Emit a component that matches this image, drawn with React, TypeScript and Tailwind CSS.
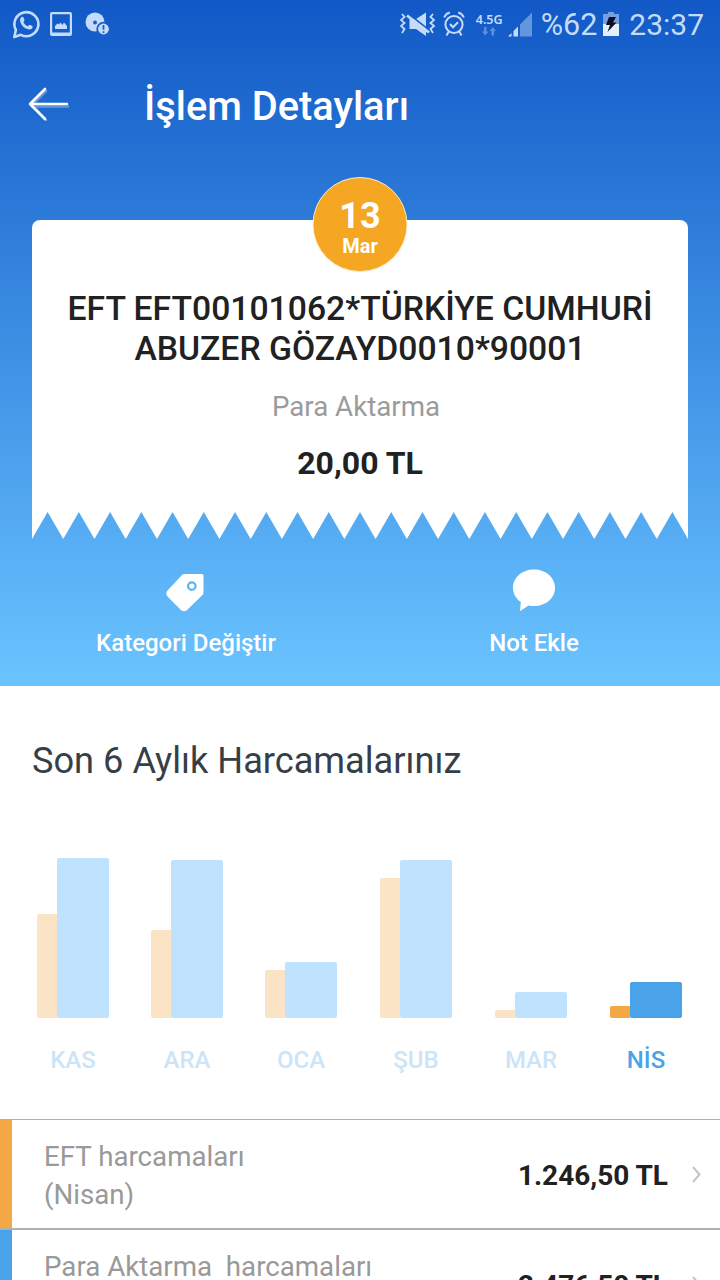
import clsx from 'clsx';

const months = [
  { label: 'KAS', income: 104, expense: 160 },
  { label: 'ARA', income: 88, expense: 158 },
  { label: 'OCA', income: 48, expense: 56 },
  { label: 'ŞUB', income: 140, expense: 158 },
  { label: 'MAR', income: 8, expense: 26 },
  { label: 'NİS', income: 12, expense: 36, active: true },
];

const rows = [
  { title: 'EFT harcamaları', period: '(Nisan)', amount: '1.246,50 TL', color: 'bg-[#f4a742]' },
  { title: 'Para Aktarma  harcamaları', period: '(Nisan)', amount: '2.476,50 TL', color: 'bg-[#4aa2e9]' },
];

// torn edge at the bottom of the receipt
const TEETH = 21;
const teethPath =
  'M0 0H656V27' +
  Array.from({ length: TEETH }, (_, i) => {
    const step = 656 / TEETH;
    const right = 656 - i * step;
    return `L${right - step / 2} 0L${right - step} 27`;
  }).join('') +
  'Z';

function StatusBar() {
  return (
    <div className="flex h-12 items-center justify-between pr-4 pl-3 text-[#c5dbfa]">
      <div className="flex items-center gap-3">
        <svg width="28" height="30" viewBox="0 0 28 30" fill="none">
          <path d="M2.3 28l1.6-7A12 12 0 1 1 8.8 25.8z" stroke="currentColor" strokeWidth="2.6" strokeLinejoin="round" />
          <path d="M9.3 8.2c.8-.8 1.8-.6 2.2.3l1 2.4c.2.6-1.2 1.7-1.1 2.2.8 1.8 2.3 3.3 4.2 4.1.6.1 1.6-1.6 2.2-1.4l2.4 1.2c.8.5.5 2-.4 2.7-1.2 1-2.9 1-4.5.4-3.3-1.2-5.8-3.7-6.9-6.9-.6-1.9-.4-3.7.9-5z" fill="currentColor" />
        </svg>
        <svg width="22" height="24" viewBox="0 0 22 24" className="-ml-0.5">
          <path fillRule="evenodd" d="M2 0h18q2 0 2 2v20q0 2-2 2H2q-2 0-2-2V2q0-2 2-2zM2.2 2.2v18.3h17.6V2.2z" fill="currentColor" />
          <path d="M5 17v-3l2.5-2.5 1.5 1 1.5-2 2 2.5 1.5-2.5L17 14v3z" fill="currentColor" />
        </svg>
        <svg width="26" height="24" viewBox="0 0 26 24" className="ml-px">
          <circle cx="10" cy="10" r="9.5" fill="currentColor" />
          <circle cx="10" cy="10.5" r="2" fill="#165dc9" />
          <circle cx="18.5" cy="17" r="6.3" fill="currentColor" stroke="#185fca" strokeWidth="1.8" />
          <path d="M18.5 13v4.800M18.5 19.2v1.800" stroke="#185fca" strokeWidth="1.8" />
        </svg>
      </div>

      <div className="flex items-center">
        <svg width="36" height="24" viewBox="0 0 36 24" fill="none" stroke="currentColor" strokeWidth="1.8">
          <path d="M2 2l2.500 3L1 8l3.500 3L1 14l3.500 3L2 21M33 2l-2.500 3L34 8l-3.500 3 3.500 3-3.500 3 2.500 4" />
          <path d="M9.500 7h6.500L26 .5v23.500l-10-7H9.500z" fill="currentColor" stroke="none" />
          <path d="M8 1.500L29 18" stroke="#175fcb" strokeWidth="1.600" />
          <path d="M7 3.500l22 17" strokeWidth="2.800" />
        </svg>
        <svg width="22" height="26" viewBox="0 0 22 26" fill="none" stroke="currentColor" strokeWidth="2" className="ml-[7px]">
          <circle cx="11" cy="13.5" r="8.6" />
          <path d="M7 13l3 3.200 5-5M1.200 6.500C2.200 4 4 2.300 6.800 1.500M20.800 6.500c-1-2.500-2.800-4.200-5.600-5M5.500 21l-2 3.500M16.500 21l2 3.500" />
        </svg>
        <div className="ml-[11px] flex w-[27px] flex-col items-center">
          <span className="font-['Noto_Sans'] text-[12.5px] leading-[14px] font-semibold">4.5G</span>
          <svg width="14" height="9" viewBox="0 0 14 9" fill="currentColor" opacity="0.4">
            <path d="M2 0h2.500v4.500H6.500L3.200 8.500 0 4.500h2zM9.500 8.500H12V4h2L10.700 0 7.500 4h2z" />
          </svg>
        </div>
        <svg width="25" height="25" viewBox="0 0 25 25" className="ml-1">
          <path d="M13 24.500V12.500L25 .5v24z" fill="currentColor" opacity="0.45" />
          <path d="M1 24.500l3.500-3.500v3.500zM6.500 24.500V19L11 14.500v10z" fill="currentColor" />
        </svg>
        <span className="mt-0.5 ml-[9px] text-[30.5px] leading-none">%62</span>
        <svg width="16" height="24" viewBox="0 0 16 24" className="ml-1.5">
          <path d="M5 0h6v2h5v10H0V2h5z" fill="currentColor" opacity="0.55" />
          <path d="M0 12h16v12H0z" fill="#e3effd" />
          <path d="M6 5h7l-3 5.500h3.500L4.500 20 7 13H3z" fill="#0a1020" />
        </svg>
        <span className="mt-0.5 ml-2.5 text-[30px] leading-none">23:37</span>
      </div>
    </div>
  );
}

function Receipt() {
  return (
    <div className="relative mx-8 mt-14">
      <div className="absolute -top-[43px] left-1/2 flex size-[95px] -translate-x-1/2 flex-col items-center rounded-full border border-[#fde9c8] bg-[#f5a623] pt-[19px] text-white">
        <span className="text-[36px] leading-[38px] font-bold">13</span>
        <span className="text-[20px] leading-[22px] font-bold">Mar</span>
      </div>
      <div className="flex h-[292px] flex-col items-center rounded-t-lg bg-white pt-[69px] text-center text-[#212121]">
        <h2 className="text-[33.7px] leading-10 font-medium whitespace-nowrap">
          EFT EFT00101062*TÜRKİYE CUMHURİ
          <br />
          ABUZER GÖZAYD0010*90001
        </h2>
        <p className="mt-5 -ml-2 text-[27.7px] leading-9 text-[#9b9b9b]">Para Aktarma</p>
        <p className="mt-[18px] text-[32px] leading-10 font-bold">20,00 TL</p>
      </div>
      <svg width="656" height="27" viewBox="0 0 656 27" className="block">
        <path d={teethPath} fill="#fff" />
      </svg>
    </div>
  );
}

function Actions() {
  return (
    <div className="flex justify-between pt-7 text-[24px] leading-8 font-medium text-white">
      <button className="ml-[86px] flex w-[200px] flex-col items-center">
        <svg width="38" height="44" viewBox="0 0 38 44" className="-ml-0.5">
          <path fillRule="evenodd" d="M18.500 7H36q1.500 0 1.500 1.500v17q0 1.500-1 2.500L21.500 42.500q-3.500 3.500-7 0L2 30q-3.500-3.500 0-7L16 8q1-1 2.500-1zM25.800 14.200a4.900 4.900 0 1 0 0 9.800 4.900 4.900 0 0 0 0-9.800z" fill="#fff" />
          <circle cx="25.8" cy="19.1" r="2.6" fill="#fff" />
        </svg>
        <span className="mt-4">Kategori Değiştir</span>
      </button>
      <button className="mr-[86px] flex w-[200px] flex-col items-center">
        <svg width="44" height="44" viewBox="0 0 44 44">
          <path d="M22 2.500c11.800 0 21 8 21 18.200S34 39 22 39c-2 0-4-.2-5.500-.6L8 44.200l.8-9.200C4 31.500 1 26.500 1 20.700 1 10.500 10.200 2.500 22 2.500z" fill="#fff" />
        </svg>
        <span className="mt-4">Not Ekle</span>
      </button>
    </div>
  );
}

function SpendingChart() {
  return (
    <div className="grid grid-cols-[114px_114px_115px_115px_115px_115px] pl-4">
      {months.map(({ label, income, expense, active }) => (
        <div key={label} className="ml-[21px] flex w-[72px] flex-col items-center">
          <div className="flex h-40 items-end">
            <div className={clsx('w-5 rounded-l-[2px]', active ? 'bg-[#f4a742]' : 'bg-[#fbe3c6]')} style={{ height: income }} />
            <div className={clsx('w-[52px] rounded-[2px]', active ? 'bg-[#4aa2e9]' : 'bg-[#bfe3ff]')} style={{ height: expense }} />
          </div>
          <span className={clsx('mt-[26px] text-[24px] leading-8 font-medium', active ? 'text-[#4aa2e9]' : 'text-[#cbe4f8]')}>
            {label}
          </span>
        </div>
      ))}
    </div>
  );
}

export default function App() {
  return (
    <div className="h-[1280px] w-[720px] overflow-hidden bg-white font-[Roboto,sans-serif]">
      <div className="h-[686px] bg-linear-to-b from-[#1158c6] to-[#6bc4ff]">
        <StatusBar />
        <header className="flex h-[116px] items-center pl-7 text-white">
          <svg width="42" height="34" viewBox="0 0 42 34" fill="none" strokeWidth="2.6" strokeLinecap="round" strokeLinejoin="round" className="-mt-1">
            <path d="M18 4L4 18l14 15M4 19.500h36" stroke="#fff" opacity="0.3" />
            <path d="M17 2L2 17l15 15M2 17h37" stroke="#fff" />
          </svg>
          <h1 className="mt-0.5 ml-[74px] text-[39.8px] leading-none font-medium">İşlem Detayları</h1>
        </header>
        <Receipt />
        <Actions />
      </div>

      <h2 className="mt-[51px] ml-8 text-[36.2px] leading-[48px] text-[#363f48]">Son 6 Aylık Harcamalarınız</h2>
      <div className="mt-[73px]">
        <SpendingChart />
      </div>

      <div className="mt-[43px] border-t border-[#b0b0b0]">
        {rows.map(({ title, period, amount, color }) => (
          <div key={title} className="flex h-[110px] items-stretch border-b-2 border-[#b0b0b0]">
            <div className={clsx('w-3', color)} />
            <div className="ml-8 flex-1 pt-[18px] text-[27.7px] leading-[38px] whitespace-pre text-[#999]">
              {title}
              <br />
              {period}
            </div>
            <div className="flex items-center text-[28px] font-bold text-[#212121]">
              <span className="mt-1">{amount}</span>
              <svg width="9" height="17" viewBox="0 0 9 17" fill="none" stroke="#c4c4c4" strokeWidth="2" className="mr-[19px] ml-6">
                <path d="M1 1l6.500 7.500L1 16" />
              </svg>
            </div>
          </div>
        ))}
      </div>
    </div>
  );
}
